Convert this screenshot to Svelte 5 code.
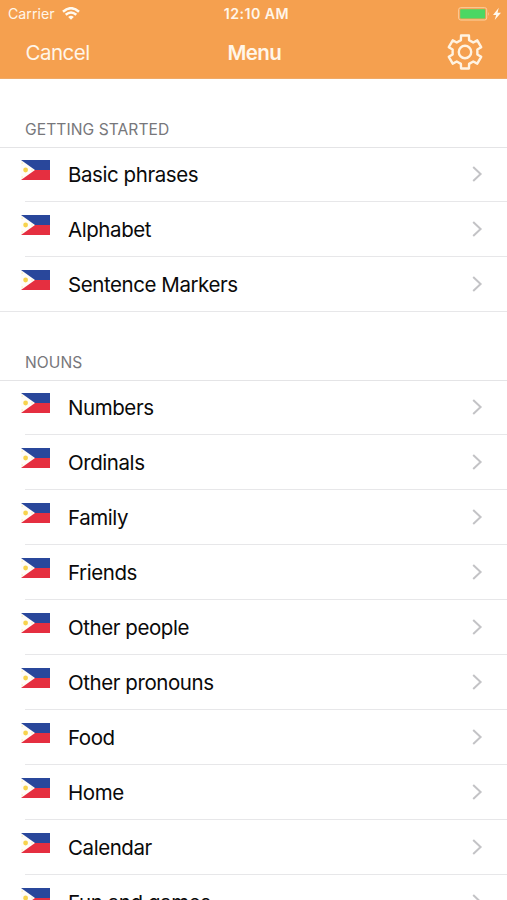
<script>
  const sections = [
    {
      title: 'GETTING STARTED',
      items: ['Basic phrases', 'Alphabet', 'Sentence Markers']
    },
    {
      title: 'NOUNS',
      items: [
        'Numbers',
        'Ordinals',
        'Family',
        'Friends',
        'Other people',
        'Other pronouns',
        'Food',
        'Home',
        'Calendar',
        'Fun and games'
      ]
    }
  ];

  // Six-toothed gear outline centred on the origin
  const point = (r, deg) => {
    const a = (deg * Math.PI) / 180;
    return `${(r * Math.cos(a)).toFixed(2)} ${(r * Math.sin(a)).toFixed(2)}`;
  };
  const gear =
    'M' +
    Array.from({ length: 6 }, (_, i) => {
      const c = i * 60 - 90;
      return [
        point(12.6, c - 19),
        point(16.9, c - 13.5),
        point(16.9, c + 13.5),
        point(12.6, c + 19)
      ].join('L');
    }).join('L') +
    'Z';
</script>

<div class="screen">
  <header>
    <div class="status">
      <div class="carrier">
        <span>Carrier</span>
        <svg width="18" height="13" viewBox="0 0 18 13" fill="none" stroke="#fffaf0" stroke-width="2.5">
          <path d="M1 4.7Q9-2.3 17 4.7M3.7 7.8Q9 3.3 14.3 7.8" />
          <path d="M6.2 10Q9 7.6 11.8 10L9 12.7Z" fill="#fffaf0" stroke="none" />
        </svg>
      </div>
      <span class="time">12:10 AM</span>
      <svg class="battery" width="44" height="14" viewBox="0 0 44 14">
        <rect x=".7" y=".7" width="28" height="12.3" rx="2" fill="none" stroke="#fbd0a0" stroke-width="1" />
        <rect x="2.2" y="2.2" width="25" height="9.3" rx=".8" fill="#4bd763" />
        <path d="M30.3 4.7q1.5 2.2 0 4.4z" fill="#fbd0a0" />
        <path d="M40.8 .8 35 8h3.2l-1.5 5L43 5.8h-3.5z" fill="#fffaf0" />
      </svg>
    </div>
    <nav>
      <span class="cancel">Cancel</span>
      <span class="title">Menu</span>
      <svg class="gear" width="36" height="36" viewBox="-18 -18 36 36" fill="none" stroke="#fff3e2" stroke-width="2.4" stroke-linejoin="round">
        <path d={gear} />
        <circle r="6.2" />
      </svg>
    </nav>
  </header>

  {#each sections as section}
    <section>
      <h2>{section.title}</h2>
      <ul>
        {#each section.items as label}
          <li>
            <svg class="flag" width="29" height="20" viewBox="0 0 29 20">
              <path d="M0 0h29v10H0z" fill="#29479b" />
              <path d="M0 10h29v10H0z" fill="#e52f40" />
              <path d="M0 0 14 10 0 20z" fill="#fffdf8" />
              <circle cx="4.6" cy="10" r="2.4" fill="#f7d34c" />
              <path d="M.5 3.1h1.4M.5 17h1.4M10.3 10h1.3" stroke="#f9e9a9" />
            </svg>
            <span class="label">{label}</span>
            <svg class="chevron" width="11" height="16" viewBox="0 0 11 16" fill="none" stroke="#c3c3c6" stroke-width="2">
              <path d="m1.2 1.1 7.4 6.9-7.4 6.9" />
            </svg>
          </li>
        {/each}
      </ul>
    </section>
  {/each}
</div>

<style>
  :global(body) { margin: 0; overflow: hidden; }
  .screen {
    width: 507px;
    height: 900px;
    overflow: hidden;
    background: #fff;
    font-family: Inter, 'Liberation Sans', sans-serif;
    color: #0a0a0a;
  }
  header {
    height: 79px;
    background: #f5a04f;
    color: #fff6e9;
    box-sizing: border-box;
    border-bottom: 1px solid #efaa68;
  }
  .status {
    display: grid;
    grid-template-columns: 1fr auto 1fr;
    align-items: center;
    height: 27px;
    padding: 0 5px 0 8px;
  }
  .carrier {
    display: flex;
    align-items: center;
    gap: 7px;
    font-size: 14.2px;
  }
  .time { font-size: 14.2px; font-weight: 600; letter-spacing: 0.45px; margin-left: 3px; }
  .battery { justify-self: end; }
  nav {
    display: grid;
    grid-template-columns: 1fr auto 1fr;
    align-items: center;
    height: 50px;
    padding: 0 24px 0 25.5px;
    font-size: 20.5px;
  }
  .cancel { letter-spacing: -0.5px; }
  .title { font-weight: 600; letter-spacing: -0.6px; }
  .gear { justify-self: end; }
  h2 {
    margin: 0;
    height: 68px;
    box-sizing: border-box;
    padding: 41px 0 0 25px;
    font-size: 15.6px;
    line-height: 20px;
    font-weight: 400;
    letter-spacing: 0.07px;
    color: #77777b;
  }
  ul {
    margin: 0;
    padding: 0;
    list-style: none;
    border-top: 1px solid #e4e4e6;
  }
  li {
    display: flex;
    align-items: center;
    height: 55px;
    box-sizing: border-box;
    padding: 0 24px 1px 21px;
    background: linear-gradient(#e7e7e9, #e7e7e9) 25px 100% / 100% 1px no-repeat;
  }
  li:first-child { height: 54px; padding-bottom: 2px; }
  li:last-child { background-position: 0 100%; }
  .flag { margin: -8px 18px 0 0; flex: none; }
  .label {
    flex: 1;
    padding-top: 2px;
    font-size: 20.5px;
    letter-spacing: -0.43px;
    line-height: 28px;
    white-space: nowrap;
  }
  .chevron { flex: none; }
</style>
